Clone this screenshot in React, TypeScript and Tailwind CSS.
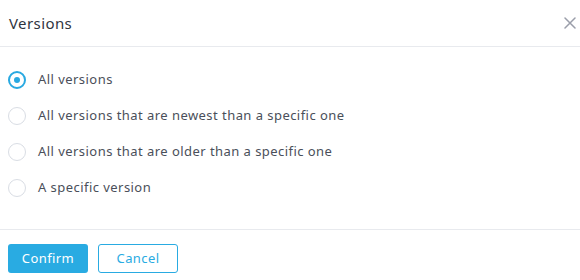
import { useState } from "react";

const options = [
  "All versions",
  "All versions that are newest than a specific one",
  "All versions that are older than a specific one",
  "A specific version",
];

export default function App() {
  const [selected, setSelected] = useState(0);

  return (
    <div className="w-[580px] h-[280px] bg-white flex flex-col font-['Noto_Sans',sans-serif]">
      {/* Header */}
      <div className="h-[47px] flex items-center justify-between pl-[9px] pr-[2px] border-b border-[#e8eaee]">
        <span className="text-[15px] tracking-[0.4px] text-[#2f3540]">Versions</span>
        <button className="w-[16px] h-[20px] flex items-center justify-center text-[#9a9eaa]">
          <svg width="12" height="12" viewBox="0 0 12 12" fill="none" stroke="currentColor" strokeWidth="1.5" strokeLinecap="round">
            <path d="M1 1l10 10M11 1L1 11" />
          </svg>
        </button>
      </div>

      {/* Options */}
      <div className="flex-1 flex flex-col pt-[15px] pl-[8px] border-b border-[#e8eaee]">
        {options.map((label, i) => (
          <label
            key={label}
            onClick={() => setSelected(i)}
            className="h-[36px] flex items-center gap-[12px] cursor-pointer"
          >
            <span
              className={
                selected === i
                  ? "w-[18px] h-[18px] rounded-full border-2 border-[#29a9e1] flex items-center justify-center"
                  : "w-[18px] h-[18px] rounded-full border border-[#d9dde4]"
              }
            >
              {selected === i && <span className="w-[6px] h-[6px] rounded-full bg-[#29a9e1]" />}
            </span>
            <span className="text-[13px] tracking-[0.45px] text-[#4a4f5a]">{label}</span>
          </label>
        ))}
      </div>

      {/* Footer */}
      <div className="h-[50px] flex items-start gap-[10px] pt-[14px] pl-[8px]">
        <button className="w-[80px] h-[29px] rounded-[3px] bg-[#29abe2] text-white text-[13px] tracking-[0.4px]">Confirm</button>
        <button className="w-[80px] h-[29px] rounded-[3px] border border-[#29abe2] text-[#29abe2] text-[13px] tracking-[0.4px]">Cancel</button>
      </div>
    </div>
  );
}
